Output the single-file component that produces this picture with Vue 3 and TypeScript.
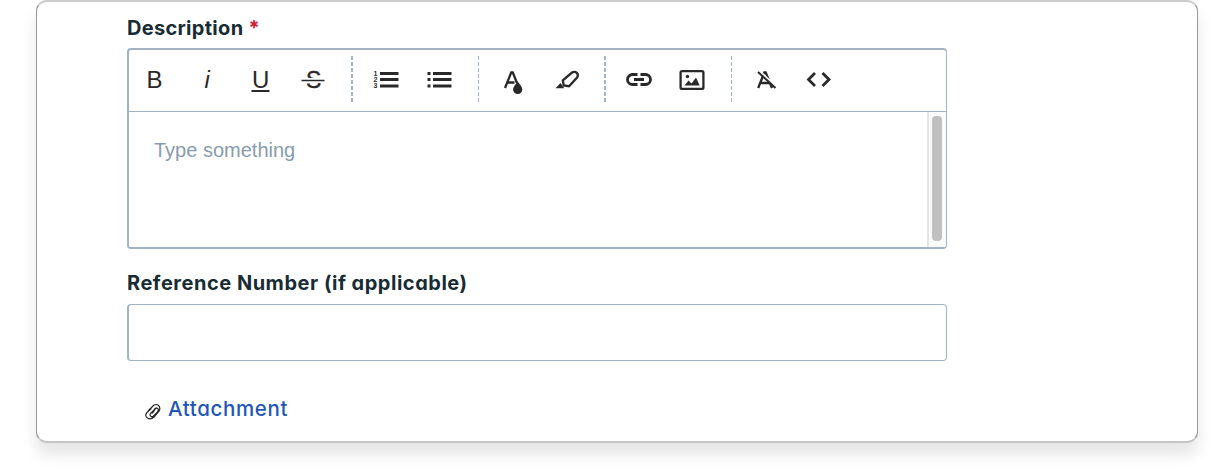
<script setup lang="ts">
import { ref } from 'vue'

const groups = [
  ['bold', 'italic', 'underline', 'strike'],
  ['ordered', 'bullets'],
  ['color', 'highlight'],
  ['link', 'image'],
  ['clear', 'code'],
]

const description = ref('')
const reference = ref('')
</script>

<template>
  <main class="card">
    <label class="label description-label" for="description">Description <span class="required">*</span></label>
    <section class="editor">
      <div class="toolbar" role="toolbar">
        <div v-for="(group, index) in groups" :key="index" class="group">
          <button v-for="tool in group" :key="tool" type="button" :aria-label="tool">
            <svg viewBox="0 0 30 30" width="30" height="30">
              <text v-if="tool === 'bold'" x="6.6" y="23" class="glyph">B</text>
              <text v-else-if="tool === 'italic'" x="11.6" y="23" class="glyph italic">i</text>
              <template v-else-if="tool === 'underline'">
                <text x="6.1" y="23" class="glyph">U</text>
                <path d="M5.5 26h18" class="line" />
              </template>
              <template v-else-if="tool === 'strike'">
                <text x="7" y="23" class="glyph strike">S</text>
                <path d="M2 15.5h24" class="knockout" />
                <path d="M2.5 15.5h23" class="line thin" />
              </template>
              <template v-else-if="tool === 'ordered'">
                <path d="M9 8.5h18.5M9 14.5h18.5M9 21h18.5" class="line rows" />
                <text x="2.4" y="10.5" class="digit">1</text>
                <text x="2.4" y="16.8" class="digit">2</text>
                <text x="2.4" y="23.1" class="digit">3</text>
              </template>
              <template v-else-if="tool === 'bullets'">
                <path d="M9 8.5h18.5M9 14.5h18.5M9 21h18.5" class="line rows" />
                <path d="M3.5 8.5h3M3.5 14.5h3M3.5 21h3" class="line rows" />
              </template>
              <template v-else-if="tool === 'color'">
                <path d="M6 23L12.2 7.5h1.6L18 18M8.5 17.5h7" class="line bold" />
                <path d="M18.7 16.5c-1 1.800-4.600 4.800-4.600 8a4.600 4.600 0 0 0 9.200 0c0-3.200-3.600-6.200-4.600-8z" class="solid" />
              </template>
              <template v-else-if="tool === 'highlight'">
                <path d="M10.800 15.300L20 7.500q2.800-1.400 4.800.400t.300 4.700L17 21.200l-5.300-.700z" class="line bold" />
                <path d="M3.500 23.300L8.500 18l3.800 5.300z" class="solid" />
              </template>
              <path v-else-if="tool === 'link'" d="M13.500 9.500H8.500a5 5 0 0 0 0 10h5M16.500 9.500H21.500a5 5 0 0 1 0 10h-5M10 14.500h10" class="line medium" />
              <template v-else-if="tool === 'image'">
                <rect x="3.600" y="6.100" width="22.800" height="17.800" rx="1.500" class="line bold" />
                <circle cx="10.500" cy="11.500" r="1.700" class="solid" />
                <path d="M7.500 20.500l4-5 3 3 4.500-6 3.700 8z" class="solid" />
              </template>
              <template v-else-if="tool === 'clear'">
                <path d="M7.200 23L13.300 7.500h1.400L21 23M9.500 18h9.500" class="line bold" />
                <path d="M9 6.500l16 15" class="knockout fine" />
                <path d="M7 7l17.500 16" class="line" />
              </template>
              <path v-else d="M11 8L4.500 14.500 11 21M18.500 8l6.500 6.500-6.500 6.500" class="line medium" />
            </svg>
          </button>
        </div>
      </div>
      <div class="content">
        <textarea id="description" v-model="description" placeholder="Type something"></textarea>
        <div class="track"><div class="thumb"></div></div>
      </div>
    </section>
    <label class="label reference-label" for="reference">Reference Number (if applicable)</label>
    <input id="reference" v-model="reference" type="text">
    <a class="attachment" href="#">
      <svg viewBox="0 0 16 18" width="16" height="18">
        <path d="M3.500 7.500L8.500 2.500q2.800-2 5 0t.700 5.500L9 14q-3.200 3.200-6.500 1t-.500-5.500l4-3.800M11.500 4.800L6 10q-1.800 2-.2 3.200t2.700-.2L12.500 8.800q1.500-2.200.2-3.300t-3 .3M9.500 7.500l-2 2.500" />
      </svg>
      <span>Attachment</span>
    </a>
  </main>
</template>

<style>
body {
  min-height: 100vh;
  background: #fff;
}
</style>

<style scoped>
.card {
  box-sizing: border-box;
  width: 1162px;
  height: 443px;
  margin-left: 36px;
  padding: 15px 90px 0;
  border: 1px solid #999;
  border-top: 2px solid #ccc;
  border-bottom: 2px solid #c6c6c6;
  border-radius: 11px;
  background: #fff;
  box-shadow: 0 12px 15px rgba(0, 0, 0, 0.1);
  font-family: Inter, sans-serif;
  font-feature-settings: "cv11";
}

.label {
  display: block;
  height: 31px;
  color: #182c35;
  font-size: 20px;
  font-weight: 650;
  line-height: 22px;
  white-space: nowrap;
}

.description-label {
  letter-spacing: 0.3px;
}

.required {
  color: #cf202f;
}

.editor {
  box-sizing: border-box;
  width: 820px;
  height: 201px;
  border: 2px solid #a3b3c1;
  border-right-width: 1px;
  border-radius: 4px;
  overflow: hidden;
}

.toolbar {
  box-sizing: border-box;
  display: flex;
  height: 62px;
  padding-top: 6px;
  border-bottom: 1px solid #a3b3c1;
}

.group {
  display: flex;
  height: 47px;
}

.group:first-child {
  margin-left: -1px;
}

/* dashed divider before every group but the first */
.group + .group::before {
  flex: 0 0 9px;
  margin-left: 11px;
  background: repeating-linear-gradient(180deg, #a3b3c1 0 4px, transparent 4px 6px) 0 0 / 2px 100% no-repeat;
  content: "";
}

.group:nth-child(3)::before,
.group:nth-child(5)::before {
  margin-left: 12px;
  background-size: 1px 100%;
}

.group:nth-child(5)::before {
  flex-basis: 8px;
}

button {
  display: grid;
  width: 53px;
  padding: 0;
  border: 0;
  background: transparent;
  place-items: center;
  cursor: pointer;
}

.group:nth-child(2) svg,
.group:nth-child(4) svg {
  margin-right: 2px;
}

.glyph {
  fill: #292929;
  font: 24px "Liberation Sans", sans-serif;
}

.glyph.italic {
  font-style: italic;
}

.glyph.strike {
  font-size: 23px;
  stroke: #292929;
  stroke-width: 0.4px;
}

.digit {
  fill: #292929;
  font: bold 7px "Liberation Sans", sans-serif;
}

.line {
  fill: none;
  stroke: #292929;
  stroke-width: 2;
}

.line.thin {
  stroke-width: 1.6;
}

.line.bold {
  stroke-width: 2.3;
}

.line.medium {
  stroke-width: 2.8;
}

.line.rows {
  stroke-width: 2.8;
}

.solid {
  fill: #292929;
}

.knockout {
  stroke: #fff;
  stroke-width: 5;
}

.knockout.fine {
  stroke-width: 2;
}

.content {
  display: flex;
  height: 135px;
}

textarea {
  box-sizing: border-box;
  flex: 1;
  padding: 26px 25px;
  border: 0;
  outline: 0;
  resize: none;
  overflow: hidden;
  color: #182c35;
  font: 20px/24px "Liberation Sans", sans-serif;
}

textarea::placeholder {
  color: #879cad;
  opacity: 1;
}

.track {
  box-sizing: border-box;
  width: 19px;
  padding: 4px 4px 6px 3px;
  border-left: 2px solid #e4e4e4;
  background: #fafafa;
}

.thumb {
  width: 10px;
  height: 125px;
  border-radius: 4px;
  background: #c0c0c0;
}

.reference-label {
  height: 32px;
  margin-top: 23px;
  letter-spacing: 0.52px;
}

input {
  display: block;
  box-sizing: border-box;
  width: 820px;
  height: 57px;
  padding: 0 24px;
  border: 1px solid #a3b3c1;
  border-left-width: 2px;
  border-radius: 4px;
  background: #fff;
  color: #182c35;
  font: inherit;
  outline: 0;
}

.attachment {
  display: flex;
  gap: 7px;
  width: max-content;
  margin: 36px 0 0 18px;
  color: #1f56b8;
  font-size: 20.5px;
  font-weight: 500;
  letter-spacing: 0.65px;
  line-height: 24px;
  text-decoration: none;
}

.attachment svg {
  margin-top: 6px;
  fill: none;
  stroke: #252525;
  stroke-width: 1.2;
  stroke-linecap: round;
}
</style>
